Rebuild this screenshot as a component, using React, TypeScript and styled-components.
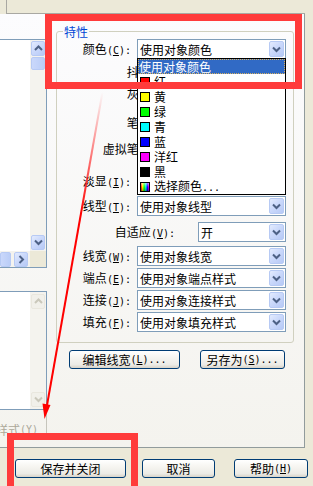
import React from 'react';
import styled, { createGlobalStyle } from 'styled-components';

const GlobalStyle = createGlobalStyle`
  html, body { margin: 0; padding: 0; }
  body {
    width: 313px; height: 486px; overflow: hidden;
    background: #ECE9D8;
    font-family: "Noto Sans CJK SC", "Noto Sans", sans-serif;
  }
  * { box-sizing: border-box; }
`;

const Screen = styled.div`
  position: relative;
  width: 313px;
  height: 486px;
  overflow: hidden;
  background: #ECE9D8;
  display: flex;
  flex-direction: column;
  color: #000;
  font-family: "Noto Sans CJK SC", "Noto Sans", sans-serif;
  font-size: 12px;
  line-height: 15px;
`;

const Latin = styled.span`
  font-family: "DejaVu Sans Mono", "Liberation Mono", monospace;
  font-size: 10px;
`;

const TopStrip = styled.div`
  flex: none;
  height: 14px;
  width: 299px;
  margin-left: 6px;
  border-left: 1px solid #A9A8A2;
  border-bottom: 1px solid #A9A8A2;
`;

const TabPage = styled.div`
  flex: none;
  width: 305px;
  height: 434px;
  display: flex;
  background: linear-gradient(180deg, #FCFCFE 0%, #F4F3EE 100%);
  border-right: 1px solid #919B9C;
  border-bottom: 1px solid #919B9C;
`;

/* ---------- left column (style lists) ---------- */

const LeftColumn = styled.div`
  flex: none;
  width: 47px;
  padding-top: 25px;
  display: flex;
  flex-direction: column;
`;

const ListBox = styled.div<{ $h: number; $mt: number }>`
  height: ${p => p.$h}px;
  margin-top: ${p => p.$mt}px;
  border: 1px solid #7F9DB9;
  border-left: none;
  background: #fff;
  display: grid;
  grid-template-columns: 1fr 16px;
  grid-template-rows: 1fr auto;
`;

const ListArea = styled.div`
  background: #fff;
`;

const VScroll = styled.div<{ $inset: number }>`
  grid-column: 2;
  grid-row: 1;
  background: #F4F3EE;
  display: flex;
  flex-direction: column;
  justify-content: space-between;
  padding: ${p => p.$inset}px 1px ${p => p.$inset}px 1px;
`;

const VScrollTop = styled.div`
  display: flex;
  flex-direction: column;
  gap: 1px;
`;

const ArrowBtn = styled.div<{ $disabled?: boolean }>`
  flex: none;
  width: 14px;
  height: 15px;
  display: flex;
  align-items: center;
  justify-content: center;
  border-radius: 2px;
  border: 1px solid ${p => (p.$disabled ? '#E9E7DE' : '#B7CAF4')};
  background: ${p =>
    p.$disabled
      ? '#F1F0EA'
      : 'linear-gradient(135deg, #E3EBFE 0%, #CBD9FB 45%, #B6C9F6 100%)'};
`;

const Thumb = styled.div<{ $w: number; $h: number }>`
  flex: none;
  width: ${p => p.$w}px;
  height: ${p => p.$h}px;
  border-radius: 2px;
  border: 1px solid #B7CAF4;
  background: linear-gradient(90deg, #CAD8FB 0%, #BACDF7 100%);
`;

const HScroll = styled.div`
  grid-column: 1;
  grid-row: 2;
  height: 16px;
  background: #F4F3EE;
  display: flex;
  align-items: center;
  justify-content: space-between;
  padding-right: 2px;
`;

const Corner = styled.div`
  grid-column: 2;
  grid-row: 2;
  background: #ECE9D8;
`;

const GhostButton = styled.div`
  height: 30px;
  border-right: 1px solid #C6C5BC;
  color: #ACA899;
  white-space: nowrap;
  display: flex;
  justify-content: flex-end;
  padding-top: 12px;
  padding-right: 8px;
  overflow: hidden;
`;

/* ---------- right column (properties) ---------- */

const RightColumn = styled.div`
  flex: none;
  width: 238px;
  margin-left: 9px;
  padding-top: 17px;
  display: flex;
  flex-direction: column;
`;

const GroupBox = styled.div`
  position: relative;
  height: 312px;
  border: 1px solid #D0D0BF;
  border-radius: 3px;
  padding-top: 7px;
  display: flex;
  flex-direction: column;
`;

const Legend = styled.div`
  position: absolute;
  top: -8px;
  left: 6px;
  padding: 0 1px;
  color: #0046D5;
  background: #FBFBFC;
  line-height: 15px;
`;

const Row = styled.div<{ $mt: number }>`
  flex: none;
  height: 20px;
  margin-top: ${p => p.$mt}px;
  display: flex;
  align-items: center;
`;

const Label = styled.div<{ $w: number; $gap: number }>`
  flex: none;
  width: ${p => p.$w}px;
  margin-right: ${p => p.$gap}px;
  text-align: right;
  white-space: nowrap;
`;

const Combo = styled.div<{ $w: number }>`
  position: relative;
  flex: none;
  width: ${p => p.$w}px;
  height: 20px;
  border: 1px solid #7F9DB9;
  background: #fff;
  display: flex;
  align-items: center;
`;

const ComboText = styled.div`
  flex: 1;
  padding-left: 2px;
  white-space: nowrap;
  overflow: hidden;
`;

const DropBtn = styled(ArrowBtn)`
  width: 15px;
  height: 16px;
  margin: 1px;
`;

const DropList = styled.div`
  position: absolute;
  z-index: 5;
  top: 100%;
  left: -1px;
  width: calc(100% + 2px);
  height: 137px;
  border: 1px solid #000;
  background: #fff;
  display: flex;
  flex-direction: column;
`;

const DropItem = styled.div<{ $selected?: boolean }>`
  flex: none;
  height: 15px;
  display: flex;
  align-items: center;
  gap: 4px;
  padding-left: ${p => (p.$selected ? 0 : 2)}px;
  white-space: nowrap;
  background: ${p => (p.$selected ? '#316AC5' : 'transparent')};
  color: ${p => (p.$selected ? '#fff' : '#000')};
  border: ${p => (p.$selected ? '1px dotted #D8B060' : 'none')};
`;

const Swatch = styled.span<{ $color: string }>`
  flex: none;
  width: 10px;
  height: 10px;
  border: 1px solid #000;
  background: ${p => p.$color};
`;

const ItemName = styled.span`
  white-space: nowrap;
`;

const ButtonRow = styled.div`
  display: flex;
  gap: 20px;
  margin-top: 7px;
  padding-left: 13px;
`;

const XPButton = styled.div<{ $w: number; $ml?: number }>`
  flex: none;
  width: ${p => p.$w}px;
  height: 19px;
  margin-left: ${p => p.$ml ?? 0}px;
  border: 1px solid #003C74;
  border-radius: 3px;
  background: linear-gradient(180deg, #FFFFFF 0%, #F7F6F2 35%, #ECEBE6 80%, #D8D3C8 100%);
  display: flex;
  align-items: center;
  justify-content: center;
  white-space: nowrap;
`;

const Footer = styled.div`
  flex: 1;
  display: flex;
  padding-top: 11px;
`;

/* ---------- annotation overlays ---------- */

const Mark = styled.div<{ $x: number; $y: number; $w: number; $h: number }>`
  position: absolute;
  z-index: 10;
  left: ${p => p.$x}px;
  top: ${p => p.$y}px;
  width: ${p => p.$w}px;
  height: ${p => p.$h}px;
  border: 7px solid #FF3B3B;
  pointer-events: none;
`;

const ArrowLayer = styled.svg`
  position: absolute;
  z-index: 11;
  left: 0;
  top: 0;
  pointer-events: none;
`;

/* ---------- data ---------- */

type Dir = 'up' | 'down' | 'right';

const Chevron: React.FC<{ dir: Dir; color?: string }> = ({ dir, color = '#4D6185' }) => {
  const w = dir === 'right' ? 7 : 9;
  const h = dir === 'right' ? 9 : 7;
  const d =
    dir === 'down' ? 'M1 1.5 L4.5 5 L8 1.5' : dir === 'up' ? 'M1 5 L4.5 1.5 L8 5' : 'M1.5 1 L5 4.5 L1.5 8';
  return (
    <svg width={w} height={h} viewBox={`0 0 ${w} ${h}`}>
      <path d={d} fill="none" stroke={color} strokeWidth={2} />
    </svg>
  );
};

const Key: React.FC<{ k: string; colon?: boolean; dots?: boolean }> = ({ k, colon, dots }) => (
  <Latin>
    (<u>{k}</u>){colon ? ':' : ''}
    {dots ? '...' : ''}
  </Latin>
);

type RowDef = { label: string; k: string; mt: number; wide: boolean; value: string; open?: boolean };

/* rows 抖动 … 淡显 sit under the open colour list, so their values are not shown */
const rows: RowDef[] = [
  { label: '颜色', k: 'C', mt: 0, wide: true, value: '使用对象颜色', open: true },
  { label: '抖动', k: 'D', mt: 3, wide: false, value: '' },
  { label: '灰度', k: 'G', mt: 2, wide: false, value: '' },
  { label: '笔号', k: '#', mt: 9, wide: false, value: '' },
  { label: '虚拟笔号', k: 'U', mt: 6, wide: false, value: '' },
  { label: '淡显', k: 'I', mt: 12, wide: true, value: '' },
  { label: '线型', k: 'T', mt: 5, wide: true, value: '使用对象线型' },
  { label: '自适应', k: 'V', mt: 6, wide: false, value: '开' },
  { label: '线宽', k: 'W', mt: 4, wide: true, value: '使用对象线宽' },
  { label: '端点', k: 'E', mt: 2, wide: true, value: '使用对象端点样式' },
  { label: '连接', k: 'J', mt: 2, wide: true, value: '使用对象连接样式' },
  { label: '填充', k: 'F', mt: 2, wide: true, value: '使用对象填充样式' },
];

const colorItems: { name: React.ReactNode; color: string }[] = [
  { name: '红', color: '#FF0000' },
  { name: '黄', color: '#FFFF00' },
  { name: '绿', color: '#00FF00' },
  { name: '青', color: '#00FFFF' },
  { name: '蓝', color: '#0000FF' },
  { name: '洋红', color: '#FF00FF' },
  { name: '黑', color: '#000000' },
  {
    name: (
      <>
        选择颜色<Latin>...</Latin>
      </>
    ),
    color:
      'linear-gradient(180deg, rgba(255,255,255,0.55) 0%, rgba(255,255,255,0) 50%, rgba(0,0,0,0.35) 100%), linear-gradient(90deg, #f00, #ff0, #0f0, #0ff, #00f, #f0f)',
  },
];

export default function App() {
  return (
    <Screen>
      <GlobalStyle />
      <TopStrip />
      <TabPage>
        <LeftColumn>
          <ListBox $h={229} $mt={0}>
            <ListArea />
            <VScroll $inset={1}>
              <VScrollTop>
                <ArrowBtn>
                  <Chevron dir="up" />
                </ArrowBtn>
                <Thumb $w={14} $h={13} />
              </VScrollTop>
              <ArrowBtn>
                <Chevron dir="down" />
              </ArrowBtn>
            </VScroll>
            <HScroll>
              <Thumb $w={11} $h={15} />
              <ArrowBtn>
                <Chevron dir="right" />
              </ArrowBtn>
            </HScroll>
            <Corner />
          </ListBox>
          <ListBox $h={119} $mt={23}>
            <ListArea />
            <VScroll $inset={2}>
              <ArrowBtn $disabled>
                <Chevron dir="up" color="#CAC8BB" />
              </ArrowBtn>
              <ArrowBtn $disabled>
                <Chevron dir="down" color="#CAC8BB" />
              </ArrowBtn>
            </VScroll>
          </ListBox>
          <GhostButton>
            添加样式<Key k="Y" />
          </GhostButton>
        </LeftColumn>

        <RightColumn>
          <GroupBox>
            <Legend>特性</Legend>
            {rows.map(r => (
              <Row key={r.label} $mt={r.mt}>
                <Label $w={r.wide ? 74 : 118} $gap={r.wide ? 6 : 23}>
                  {r.label}
                  <Key k={r.k} colon />
                </Label>
                <Combo $w={r.wide ? 149 : 88}>
                  <ComboText>{r.value}</ComboText>
                  <DropBtn>
                    <Chevron dir="down" />
                  </DropBtn>
                  {r.open && (
                    <DropList>
                      <DropItem $selected>使用对象颜色</DropItem>
                      {colorItems.map((c, i) => (
                        <DropItem key={i}>
                          <Swatch $color={c.color} />
                          <ItemName>{c.name}</ItemName>
                        </DropItem>
                      ))}
                    </DropList>
                  )}
                </Combo>
              </Row>
            ))}
          </GroupBox>
          <ButtonRow>
            <XPButton $w={111}>
              编辑线宽<Key k="L" dots />
            </XPButton>
            <XPButton $w={85}>
              另存为<Key k="S" dots />
            </XPButton>
          </ButtonRow>
        </RightColumn>
      </TabPage>

      <Footer>
        <XPButton $w={111} $ml={15}>
          保存并关闭
        </XPButton>
        <XPButton $w={73} $ml={16}>
          取消
        </XPButton>
        <XPButton $w={74} $ml={19}>
          帮助<Key k="H" />
        </XPButton>
      </Footer>

      <Mark $x={45} $y={14} $w={257} $h={75} />
      <Mark $x={7} $y={433} $w={131} $h={70} />
      <ArrowLayer width={313} height={486} viewBox="0 0 313 486">
        <defs>
          <linearGradient id="fade" gradientUnits="userSpaceOnUse" x1="0" y1="92" x2="0" y2="215">
            <stop offset="0" stopColor="#FF0000" stopOpacity="0" />
            <stop offset="1" stopColor="#FF0000" stopOpacity="1" />
          </linearGradient>
        </defs>
        <line x1="102.5" y1="92" x2="46.5" y2="408" stroke="url(#fade)" strokeWidth="2" />
        <polygon points="44.5,419 50.5,405 42.5,403.5" fill="#FF0000" />
      </ArrowLayer>
    </Screen>
  );
}
